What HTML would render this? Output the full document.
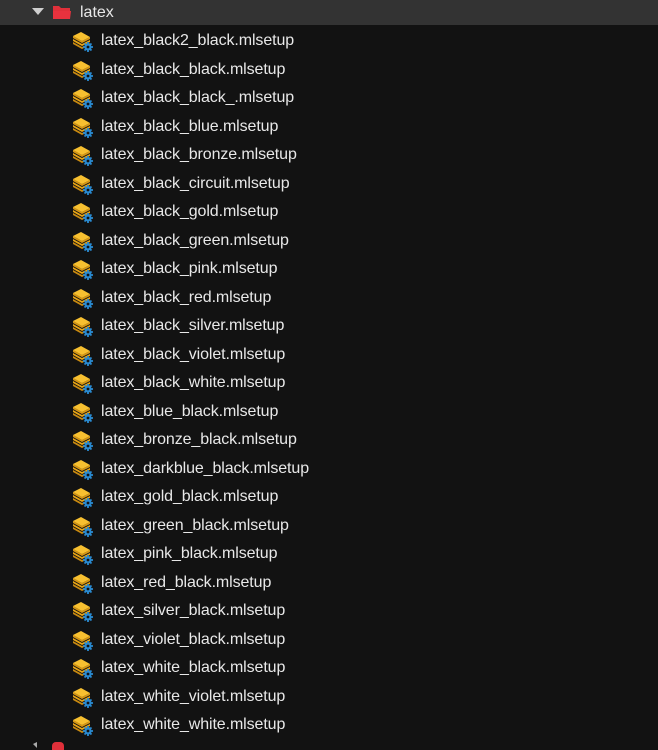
<!DOCTYPE html>
<html><head><meta charset="utf-8"><style>
body{margin:0;width:658px;height:746px;background:#121212;overflow:hidden;font-family:"Liberation Sans",sans-serif;color:#e8e8e8;position:relative}
.hdr{position:absolute;left:0;top:0;width:658px;height:25px;background:#333}
.row{position:absolute;left:0;height:28px;width:658px}
.row span{position:absolute;left:101px;top:5px;font-size:16px;line-height:20px;letter-spacing:-0.1px}
.row svg{position:absolute;left:72px;top:4px}
</style></head><body>
<div class="hdr">
<svg style="position:absolute;left:32px;top:8px" width="12" height="8"><polygon points="0,0 12,0 6,7" fill="#cfcfcf"/></svg>
<svg style="position:absolute;left:52px;top:4px" width="20" height="16"><path d="M1 2h6l2 2h9v3H1z" fill="#e0303a"/><path d="M1 7h18l-1 8H1z" fill="#e8323e"/></svg>
<span style="position:absolute;left:80px;top:3px;font-size:16px;line-height:20px;color:#e8e8e8">latex</span>
</div>
<div id="list"></div>
<svg style="position:absolute;left:33px;top:742px" width="12" height="6"><polygon points="0,2 4,0 4,6" fill="#aaa"/></svg>
<div style="position:absolute;left:52px;top:742px;width:12px;height:8px;background:#e0303a;border-radius:4px 4px 0 0"></div>
<script>
var names=["black2_black","black_black","black_black_","black_blue","black_bronze","black_circuit","black_gold","black_green","black_pink","black_red","black_silver","black_violet","black_white","blue_black","bronze_black","darkblue_black","gold_black","green_black","pink_black","red_black","silver_black","violet_black","white_black","white_violet","white_white"];
var icon='<svg width="24" height="24" viewBox="0 0 24 24"><path d="M1 12l9 5 8-4v2l-8 4-9-5z" fill="#c98a10"/><path d="M1 9l9 5 8-4v2l-8 4-9-5z" fill="#e8a514"/><path d="M1 6l9 5 8-4v2l-8 4-9-5z" fill="#d69612"/><path d="M1 6l8-4 9 5-8 4z" fill="#f7c030"/><circle cx="16" cy="17" r="3.6" fill="#2a8ad0"/><g stroke="#2a8ad0" stroke-width="1.8"><path d="M16 12v10M11 17h10M12.5 13.5l7 7M19.5 13.5l-7 7"/></g><circle cx="16" cy="17" r="1.4" fill="#121212"/></svg>';
var h='';for(var i=0;i<names.length;i++){var y=26+i*28.5;h+='<div class="row" style="top:'+y+'px">'+icon+'<span>latex_'+names[i]+'.mlsetup</span></div>';}
document.getElementById('list').innerHTML=h;
</script>
</body></html>
